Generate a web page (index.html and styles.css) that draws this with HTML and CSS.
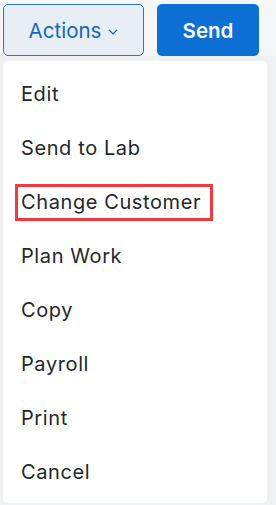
FILE: index.html
```
<!DOCTYPE html>
<html lang="en">

<head>
    <meta charset="UTF-8">
    <meta name="viewport" content="width=device-width, initial-scale=1.0">
    <title>Actions</title>
    <link rel="stylesheet" href="styles.css">
</head>

<body>
    <div class="toolbar">
        <button class="btn-actions">Actions
            <svg class="chevron" width="10" height="6" viewBox="0 0 10 6">
                <path d="M1 1l4 4 4-4" fill="none" stroke="#1565c0" stroke-width="1.2" />
            </svg>
        </button>
        <button class="btn-send">Send</button>
    </div>

    <ul class="menu">
        <li>Edit</li>
        <li>Send to Lab</li>
        <li><span class="highlight">Change Customer</span></li>
        <li>Plan Work</li>
        <li>Copy</li>
        <li>Payroll</li>
        <li>Print</li>
        <li>Cancel</li>
    </ul>
</body>

</html>
```

FILE: styles.css
```
body {
    margin: 0;
    width: 276px;
    height: 505px;
    overflow: hidden;
    font-family: 'Inter', sans-serif;
    background: #eef0f2;
}

.toolbar {
    display: flex;
    gap: 13px;
    padding: 4px 0 0 3px;
    background: #f4f6f8;
}

.toolbar button {
    height: 52px;
    border-radius: 5px;
    font-family: 'Inter', sans-serif;
    font-size: 20.5px;
    display: flex;
    align-items: center;
    justify-content: center;
}

.btn-actions {
    width: 141px;
    border: 1px solid #2a74c8;
    background: #e8eef6;
    color: #1565c0;
    gap: 7px;
}

.chevron {
    margin-top: 3px;
}

.btn-send {
    width: 102px;
    border: none;
    background: #0b6fd4;
    color: #fff;
    font-weight: 600;
}

.menu {
    list-style: none;
    margin: 5px 0 0 3px;
    padding: 6px 0 0;
    width: 264px;
    height: 442px;
    box-sizing: border-box;
    background: #fff;
    border-radius: 5px;
}

.menu li {
    height: 54px;
    display: flex;
    align-items: center;
    padding-left: 18px;
    font-size: 20px;
    letter-spacing: 0.6px;
    color: #24272b;
}

.highlight {
    margin-left: -6px;
    padding: 3px 9px 4px 3px;
    border: 3px solid #ef3b3e;
}
```
